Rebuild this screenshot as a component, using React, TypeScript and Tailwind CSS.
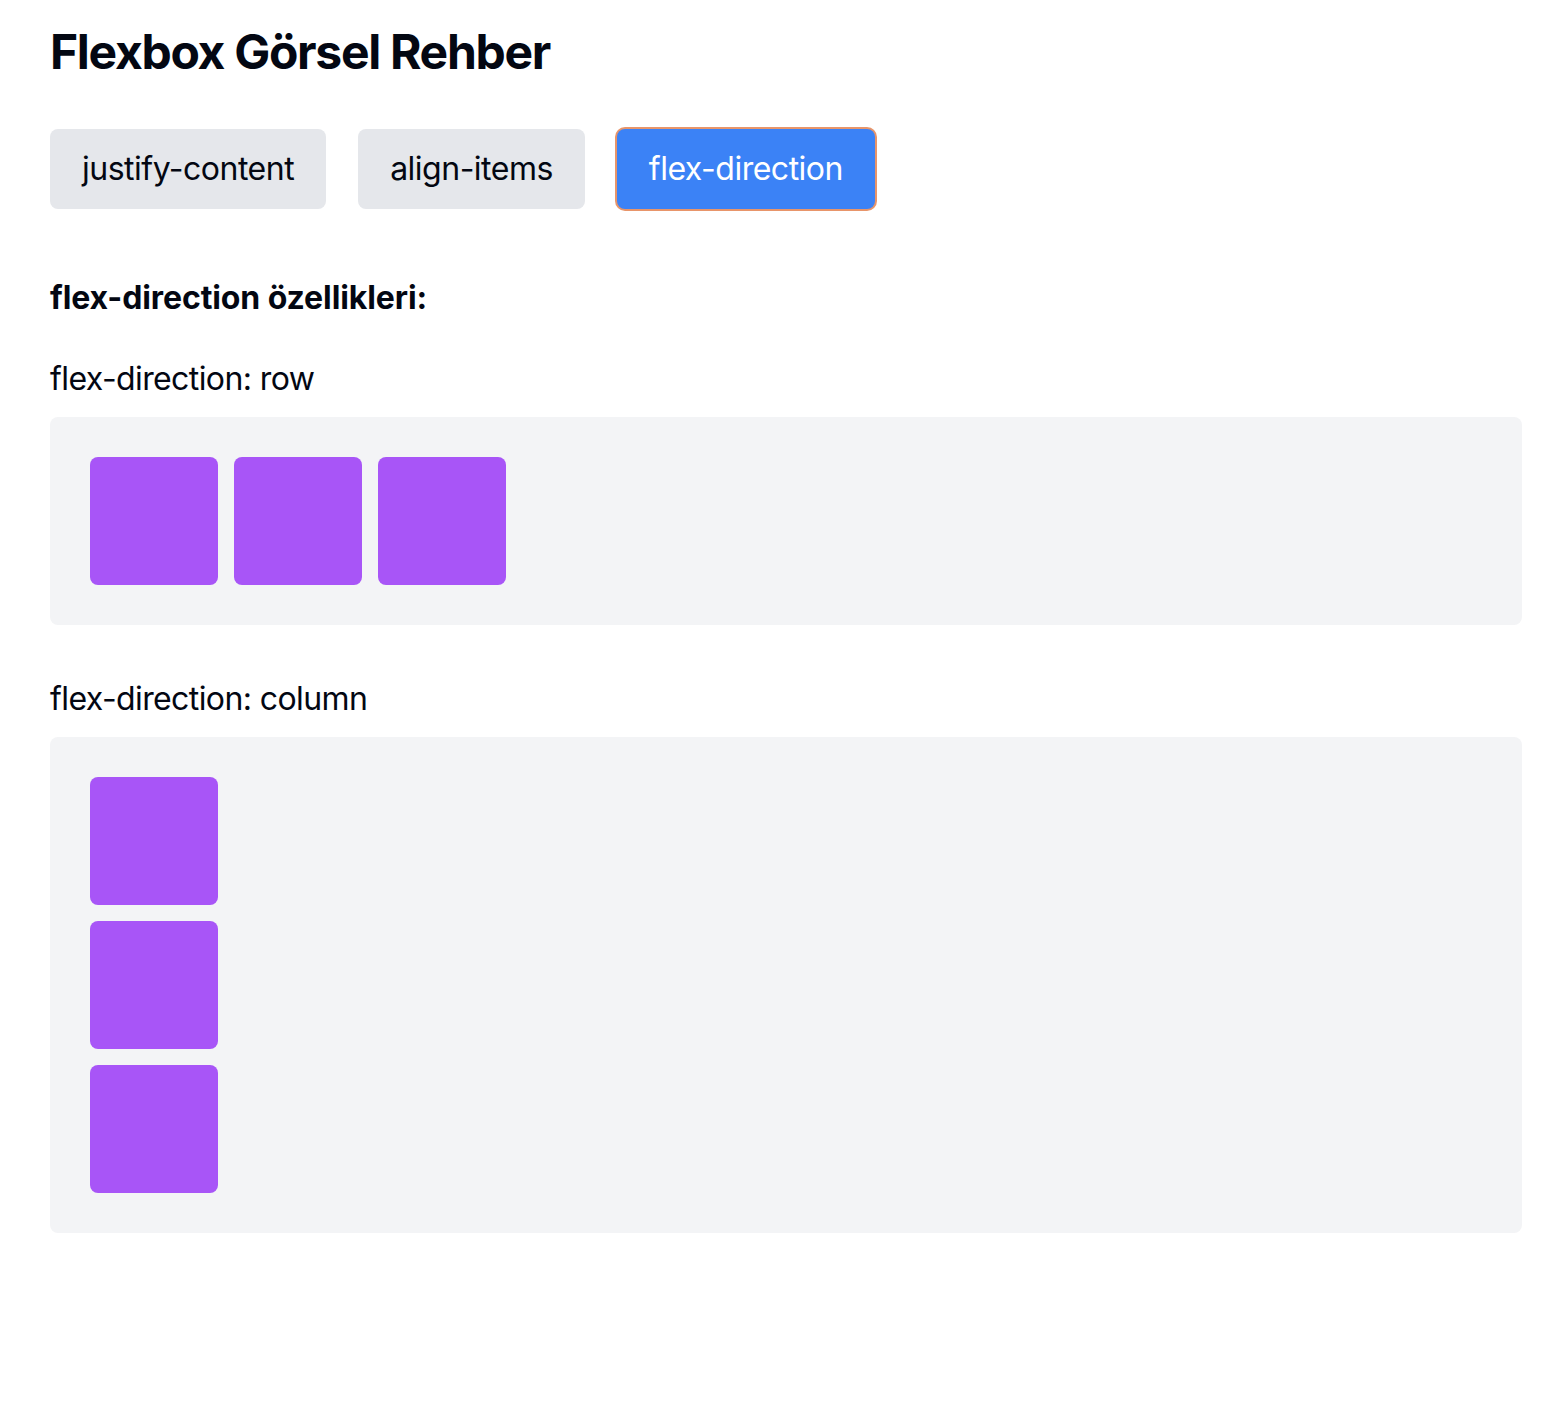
const TABS = ["justify-content", "align-items", "flex-direction"];

function Box() {
  return <div className="h-[128px] w-[128px] rounded-[8px] bg-[#a855f7]" />;
}

function Demo({ label, column }: { label: string; column?: boolean }) {
  return (
    <div className="mb-[50px]">
      <p className="mb-[14px] text-[32px] leading-[48px] tracking-[-0.6px] text-[#030712]">{label}</p>
      <div
        className={`flex gap-[16px] rounded-[8px] bg-[#f3f4f6] p-[40px] ${
          column ? "flex-col" : "flex-row"
        }`}
      >
        <Box />
        <Box />
        <Box />
      </div>
    </div>
  );
}

export default function App() {
  const active = "flex-direction";
  return (
    <div className="min-h-screen bg-white pl-[50px] pr-[40px] pt-[20px] font-['Inter',sans-serif] text-[#030712]">
      <h1 className="mb-[45px] text-[48px] font-bold leading-[64px] tracking-[-1.3px]">Flexbox Görsel Rehber</h1>

      <div className="mb-[65px] flex gap-[32px]">
        {TABS.map((t) => (
          <button
            key={t}
            className={`h-[80px] rounded-[8px] px-[32px] text-[32px] leading-[48px] tracking-[-0.5px] ${
              t === active
                ? "bg-[#3b82f6] text-white ring-2 ring-[#e8956a]"
                : "bg-[#e5e7eb] text-[#030712]"
            }`}
          >
            {t}
          </button>
        ))}
      </div>

      <h2 className="mb-[33px] text-[32px] font-bold leading-[48px] tracking-[-0.1px]">flex-direction özellikleri:</h2>

      <Demo label="flex-direction: row" />
      <Demo label="flex-direction: column" column />
    </div>
  );
}
